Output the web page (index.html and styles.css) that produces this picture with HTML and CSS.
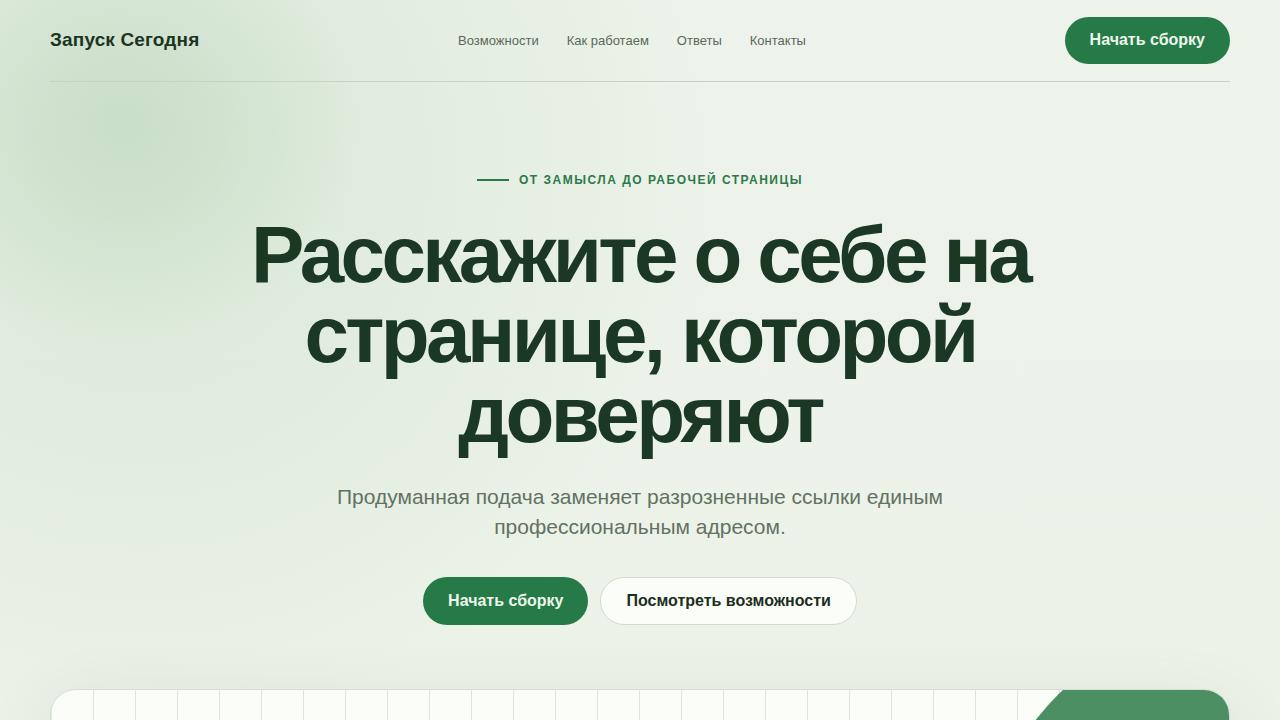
FILE: index.html
```html
<!DOCTYPE html>
<html lang="ru">
<head>
<meta charset="utf-8">
<title>Запуск Сегодня</title>
<link rel="stylesheet" href="styles.css">
</head>
<body>
<div class="page">
  <header class="header">
    <div class="logo">Запуск Сегодня</div>
    <nav class="nav">
      <a href="#">Возможности</a>
      <a href="#">Как работаем</a>
      <a href="#">Ответы</a>
      <a href="#">Контакты</a>
    </nav>
    <a class="btn btn-primary btn-header" href="#">Начать сборку</a>
  </header>

  <section class="hero">
    <div class="eyebrow"><span class="eyebrow-line"></span>ОТ ЗАМЫСЛА ДО РАБОЧЕЙ СТРАНИЦЫ</div>
    <h1 class="title">Расскажите о себе на<br>странице, которой<br>доверяют</h1>
    <p class="lead">Продуманная подача заменяет разрозненные ссылки единым профессиональным адресом.</p>
    <div class="actions">
      <a class="btn btn-primary" href="#">Начать сборку</a>
      <a class="btn btn-secondary" href="#">Посмотреть возможности</a>
    </div>
  </section>

  <div class="panel">
    <div class="panel-grid"></div>
    <div class="panel-blob"></div>
  </div>
</div>
</body>
</html>
```
FILE: styles.css
```css
* { box-sizing: border-box; }
html, body { margin: 0; padding: 0; }
body {
  font-family: "Liberation Sans", Arial, sans-serif;
  background-color: #edf3ea;
  background-image:
    radial-gradient(ellipse 240px 220px at 120px 120px, rgba(192, 217, 192, 0.65), rgba(192, 217, 192, 0) 100%),
    radial-gradient(ellipse 580px 580px at 140px 160px, rgba(205, 225, 204, 0.65), rgba(205, 225, 204, 0) 100%),
    linear-gradient(180deg, #edf3ea 0%, #ecf2e8 100%);
  height: 720px;
  overflow: hidden;
  color: #1b3823;
}
.page {
  padding: 0 50px;
}
.header {
  height: 82px;
  border-bottom: 1px solid #c8d3c6;
  display: flex;
  justify-content: space-between;
  align-items: center;
}
.logo {
  font-size: 19px;
  font-weight: 700;
  color: #1b3522;
  letter-spacing: 0.15px;
  padding-bottom: 1px;
}
.nav {
  display: flex;
  gap: 28px;
  font-size: 13px;
  padding-bottom: 1px;
}
.nav a {
  color: #5a695a;
  text-decoration: none;
}
.btn {
  display: inline-flex;
  align-items: center;
  justify-content: center;
  height: 48px;
  padding: 0 25px;
  border-radius: 999px;
  font-size: 16px;
  font-weight: 700;
  text-decoration: none;
}
.btn-primary {
  background: #267a48;
  color: #eef6ec;
}
.btn-header {
  height: 47px;
  margin-bottom: 1px;
}
.btn-secondary {
  background: #fbfdf8;
  color: #1b2e21;
  border: 1px solid #d3dbd1;
}
.hero {
  padding-top: 90px;
  display: flex;
  flex-direction: column;
  align-items: center;
  text-align: center;
}
.eyebrow {
  display: flex;
  align-items: center;
  gap: 10px;
  font-size: 12px;
  font-weight: 700;
  letter-spacing: 1.5px;
  color: #2d7a49;
  line-height: 16px;
}
.eyebrow-line {
  width: 32px;
  height: 2px;
  background: #2d7a49;
}
.title {
  margin: 27px 0 0;
  font-size: 80px;
  line-height: 80px;
  font-weight: 700;
  letter-spacing: -0.045em;
  color: #1a3823;
}
.lead {
  margin: 27px 0 0;
  max-width: 660px;
  font-size: 21px;
  line-height: 30px;
  color: #627262;
}
.actions {
  margin-top: 35px;
  display: flex;
  gap: 12px;
}
.panel {
  position: relative;
  margin-top: 64px;
  height: 300px;
  border-radius: 26px;
  border: 1px solid #d6ddd3;
  background: #fbfdf8;
  overflow: hidden;
  box-shadow: 0 20px 70px rgba(60, 100, 70, 0.12);
}
.panel-grid {
  position: absolute;
  inset: 0;
  background-image: linear-gradient(90deg, rgba(200, 210, 198, 0.55) 1px, transparent 1px);
  background-size: 42px 100%;
  background-position: 42px 0;
}
.panel-blob {
  position: absolute;
  width: 600px;
  height: 600px;
  border-radius: 50%;
  background: #468b5d;
  opacity: 0.97;
  left: 920px;
  top: -84px;
}
```
